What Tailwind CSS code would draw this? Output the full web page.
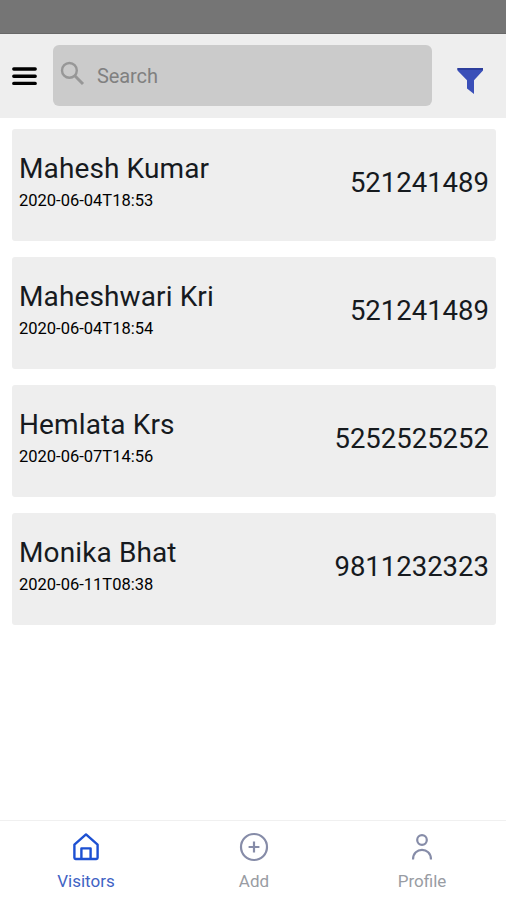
<!DOCTYPE html>
<html lang="en">
<head>
  <meta charset="UTF-8">
  <meta name="viewport" content="width=device-width, initial-scale=1.0">
  <title>Visitors</title>
  <script src="https://cdn.jsdelivr.net/npm/@tailwindcss/browser@4"></script>
</head>
<body class="bg-white h-screen flex flex-col overflow-hidden font-['Roboto',sans-serif]">
  <!-- Status bar -->
  <div class="h-[34px] shrink-0 bg-[#757575] border-b border-[#686868]"></div>

  <!-- Search header -->
  <header class="h-[84px] shrink-0 bg-[#eeeeee] flex items-start pl-3 pr-[22px] pt-[11px]">
    <button class="mt-[22px]" aria-label="Menu">
      <svg class="block" width="26" height="19" viewBox="0 0 26 19" stroke="#000" stroke-width="3.4" stroke-linecap="round">
        <path d="M1.8 2H23.2M1.8 9.2H23.2M1.8 16.4H23.2"/>
      </svg>
    </button>
    <div class="ml-[15px] w-[379px] h-[61px] rounded-md bg-[#cbcbcb] flex items-center">
      <svg class="ml-[7px] -mt-1 block" width="26" height="26" viewBox="0 0 26 26" fill="none" stroke="#979797" stroke-width="2.4">
        <circle cx="9.4" cy="9.4" r="7.4"/>
        <path d="M14.8 14.8L23 23" stroke-width="3"/>
      </svg>
      <input type="text" placeholder="Search" class="ml-[11px] w-72 h-full bg-transparent text-[20px] tracking-[-0.1px] outline-none placeholder:text-[#808080]">
    </div>
    <button class="ml-auto mt-[22px]" aria-label="Filter">
      <svg class="block" width="27" height="28" viewBox="0 0 27 28">
        <path d="M0.5 1H26V3.4L17 13.2V27L10 21.6V13.2L0.5 3.4Z" fill="#3a4fb8"/>
        <path d="M0.5 1H26V3H0.5Z" fill="#2d3e9c"/>
      </svg>
    </button>
  </header>

  <!-- Visitor list -->
  <main class="flex-1 flex flex-col gap-4 pl-3 pr-[10px] pt-[11px]">
    <div class="h-28 rounded-[3px] bg-[#eeeeee] flex justify-between px-[7px] text-[#161a1e]">
      <div class="pt-[23px]">
        <h2 class="text-[28px] leading-[34px] tracking-[0.12px]">Mahesh Kumar</h2>
        <p class="text-[16.5px] leading-[30px] text-black">2020-06-04T18:53</p>
      </div>
      <span class="pt-[37px] text-[27.5px] leading-[34px]">521241489</span>
    </div>
    <div class="h-28 rounded-[3px] bg-[#eeeeee] flex justify-between px-[7px] text-[#161a1e]">
      <div class="pt-[23px]">
        <h2 class="text-[28px] leading-[34px] tracking-[0.12px]">Maheshwari Kri</h2>
        <p class="text-[16.5px] leading-[30px] text-black">2020-06-04T18:54</p>
      </div>
      <span class="pt-[37px] text-[27.5px] leading-[34px]">521241489</span>
    </div>
    <div class="h-28 rounded-[3px] bg-[#eeeeee] flex justify-between px-[7px] text-[#161a1e]">
      <div class="pt-[23px]">
        <h2 class="text-[28px] leading-[34px] tracking-[0.12px]">Hemlata Krs</h2>
        <p class="text-[16.5px] leading-[30px] text-black">2020-06-07T14:56</p>
      </div>
      <span class="pt-[37px] text-[27.5px] leading-[34px]">5252525252</span>
    </div>
    <div class="h-28 rounded-[3px] bg-[#eeeeee] flex justify-between px-[7px] text-[#161a1e]">
      <div class="pt-[23px]">
        <h2 class="text-[28px] leading-[34px] tracking-[0.12px]">Monika Bhat</h2>
        <p class="text-[16.5px] leading-[30px] text-black">2020-06-11T08:38</p>
      </div>
      <span class="pt-[37px] text-[27.5px] leading-[34px]">9811232323</span>
    </div>
  </main>

  <!-- Bottom tabs -->
  <nav class="h-20 shrink-0 border-t border-[#f0f0f0] pl-[2px] grid grid-cols-3 text-[17px] leading-6 text-[#999ca3]">
    <a class="flex flex-col items-center pt-[10px] text-[#3f63c4]">
      <svg class="block" width="32" height="32" viewBox="0 0 32 32" fill="none" stroke="#1d50d2" stroke-width="2.4" stroke-linejoin="round">
        <path d="M4.4 13.6L16 3.4L27.6 13.6V26.8Q27.6 28 26.4 28H5.6Q4.4 28 4.4 26.8Z"/>
        <path d="M11.4 28V17.4H20.6V28"/>
      </svg>
      <span class="mt-[6px]">Visitors</span>
    </a>
    <a class="flex flex-col items-center pt-[10px]">
      <svg class="block" width="32" height="32" viewBox="0 0 32 32" fill="none" stroke="#868ca8" stroke-width="2.2">
        <circle cx="16" cy="16" r="13"/>
        <path d="M16 10.6V21.4M10.6 16H21.4"/>
      </svg>
      <span class="mt-[6px]">Add</span>
    </a>
    <a class="flex flex-col items-center pt-[10px]">
      <svg class="block" width="32" height="32" viewBox="0 0 32 32" fill="none" stroke="#868ca8" stroke-width="2.2">
        <circle cx="16" cy="9" r="4.8"/>
        <path d="M7 28.4C7 15.6 25 15.6 25 28.4"/>
      </svg>
      <span class="mt-[6px]">Profile</span>
    </a>
  </nav>
</body>
</html>
